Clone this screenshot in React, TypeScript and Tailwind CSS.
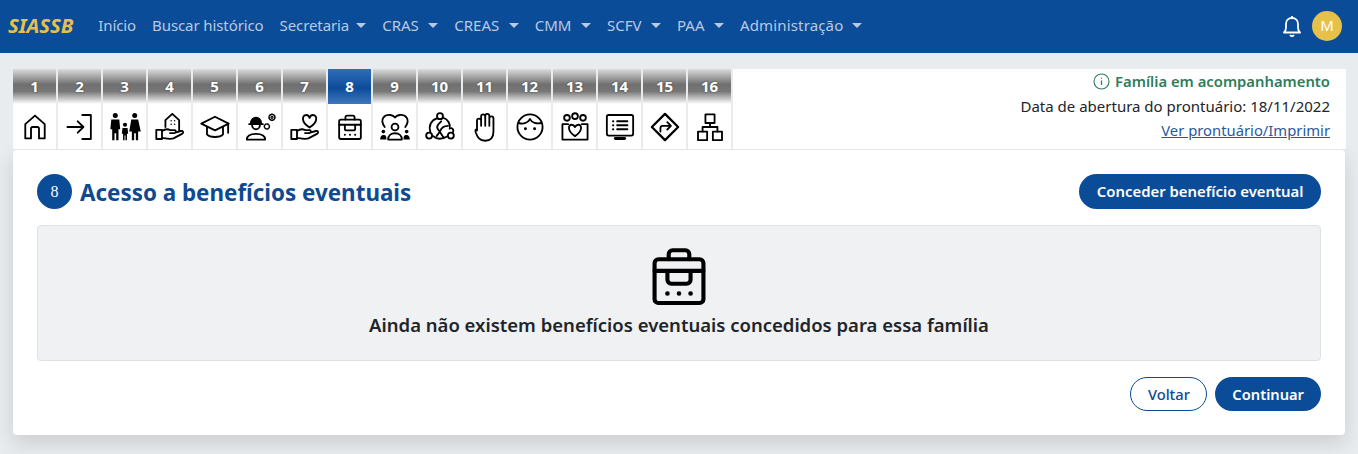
import type { ReactNode } from "react";

const menu = [
  { label: "Início", text: "tracking-[-0.100px]" },
  { label: "Buscar histórico", text: "tracking-[-0.100px]" },
  { label: "Secretaria", text: "tracking-[-0.100px]", caret: "ml-[7px]" },
  { label: "CRAS", text: "", caret: "ml-[9.500px]" },
  { label: "CREAS", text: "", caret: "ml-[9.500px]" },
  { label: "CMM", text: "", caret: "ml-[9.500px]" },
  { label: "SCFV", text: "", caret: "ml-[9.500px]" },
  { label: "PAA", text: "", caret: "ml-[9.500px]" },
  { label: "Administração", text: "tracking-[0.150px]", caret: "ml-[9px]" },
];

const Ico = ({ children, size = 32 }: { children: ReactNode; size?: number }) => (
  <svg width={size} height={size} viewBox="0 0 28 28" fill="none" stroke="#000" strokeWidth="1.600" strokeLinecap="round" strokeLinejoin="round">
    {children}
  </svg>
);

const HandBase = () => (
  <>
    <path d="M2 16.500h5v8H2z" />
    <path d="M7 17.500c3-2 5-2 7-.8h4c1.500 0 1.500 2.600 0 2.600h-4M18.500 19l5-1.500c2-.4 2.800 1.500 1 2.500l-7.500 4c-3 1-6 .2-10-.5" />
  </>
);

const Case = () => (
  <>
    <rect x="4.500" y="7.500" width="19" height="17" rx="1.500" />
    <path d="M4.500 12h19M10 7.500V5.500a1.500 1.500 0 0 1 1.500-1.500h5a1.500 1.500 0 0 1 1.500 1.500v2M9.500 12v3.500a1.500 1.500 0 0 0 1.500 1.500h6a1.500 1.500 0 0 0 1.500-1.500V12" />
    <path d="M9.500 20.800h.01M14 20.800h.01M18.500 20.800h.01" strokeWidth="1.800" />
  </>
);

const icons: ReactNode[] = [
  <Ico key="1">
    <path d="M5.500 24V11.500L14 4l8.500 7.500V24h-5V15.500a1.500 1.500 0 0 0-1.500-1.500h-4a1.500 1.500 0 0 0-1.500 1.500V24z" />
  </Ico>,
  <Ico key="2">
    <path d="M16 3.500h7.500v21H16" />
    <path d="M3 14h14M12 9l5 5-5 5" />
  </Ico>,
  <Ico key="3">
    <g fill="#000" stroke="none">
      <circle cx="5.500" cy="4" r="2.200" />
      <path d="M2 7.500h7l.8 8.500H8.300v9.500h-2v-6h-1.500v6h-2V16H1.200z" />
      <circle cx="22.500" cy="4" r="2.200" />
      <path d="M19.500 7.500h6l2.300 10.500h-2.300v7.500h-2v-6h-1.500v6h-2V18h-2.300z" />
      <circle cx="14" cy="12" r="1.800" />
      <path d="M11.800 14.800h4.400l.6 5h-1.100v5.700h-1.300v-4h-.8v4h-1.300v-5.700h-1.100z" />
    </g>
  </Ico>,
  <Ico key="4">
    <HandBase />
    <path d="M10 14V8l6-5.500L22 8v9M22 8l-6-5.500" />
    <path d="M15 8.500h.01M18 8.500h.01M15 11.500h.01M18 11.500h.01" strokeWidth="1.300" />
  </Ico>,
  <Ico key="5">
    <path d="M14 5 2 11l12 6 12-6z" />
    <path d="M7 14v6.500c2.500 3 11.500 3 14 0V14M25.500 11v8" />
  </Ico>,
  <Ico key="6">
    <path d="M2.500 25c0-3.500 3-5 8-5s8 1.500 8 5z" />
    <path d="M7 11.500c0 6 7 6 7 0" />
    <path d="M4.500 11.500h12" />
    <path d="M6 11c0-7 9-7 9 0z" fill="#000" />
    <circle cx="24.500" cy="5.500" r="2.600" strokeWidth="1.400" strokeDasharray="1.300 1" />
    <circle cx="24.500" cy="5.500" r=".9" strokeWidth="1" />
    <circle cx="20" cy="13.500" r="2.200" strokeWidth="1.300" strokeDasharray="1.200 .9" />
  </Ico>,
  <Ico key="7">
    <HandBase />
    <path d="M18 14.500c-8-5-6.500-11-3-11 1.500 0 2.500 1 3 2.500.5-1.500 1.500-2.500 3-2.500 3.500 0 5 6-3 11z" />
  </Ico>,
  <Ico key="8">
    <Case />
  </Ico>,
  <Ico key="9">
    <path d="M5 14C0 7 5 3 10 3.500c2 .2 3.200 1 4 2.200.8-1.200 2-2 4-2.200 5-.5 10 3.500 5 10.500" />
    <circle cx="14" cy="14" r="3" />
    <path d="M8 25c0-3.500 2.500-5.500 6-5.500s6 2 6 5.500z" />
    <g fill="#000" stroke="none">
      <circle cx="3.800" cy="18" r="1.600" />
      <circle cx="24.200" cy="18" r="1.600" />
      <path d="M1 25c0-2.500 1-4 3-4s2.500 1 2.500 4zM27 25c0-2.500-1-4-3-4s-2.500 1-2.500 4z" />
    </g>
  </Ico>,
  <Ico key="10">
    <circle cx="14" cy="4.500" r="2.600" />
    <circle cx="4.500" cy="21.500" r="2.600" />
    <circle cx="23.500" cy="21.500" r="2.600" />
    <path d="M11.500 6.500C6 8 4 13 5.500 18M17 6c4 1 6.500 6 5.500 9.500M8 22c3 3 8 3 12.500 0M15 9c-3 3-5 5-2 8l4 6M21 13c-4 0-6 2-7 5l-3 4M24 15c2 .5 2 3 1 4" />
  </Ico>,
  <Ico key="11">
    <path d="M7 17V8.500a1.800 1.800 0 0 1 3.600 0V13M10.600 13V4.800a1.800 1.800 0 0 1 3.600 0V13M14.200 13V4.300a1.800 1.800 0 0 1 3.600 0V13M17.800 13V6.500a1.800 1.800 0 0 1 3.600 0V18c0 5-2.500 8-7.200 8C9 26 7.500 23 6 19c-.6-2-.6-3 1-3" />
  </Ico>,
  <Ico key="12">
    <circle cx="14" cy="14" r="11" />
    <path d="M4 10.500c3.500 1 8 .5 10-3.500 1.500 3.500 6 4.500 10 3.500" />
    <path d="M10 15.500h.01M18 15.500h.01" strokeWidth="2.600" />
  </Ico>,
  <Ico key="13">
    <circle cx="7" cy="6" r="2.500" />
    <circle cx="14" cy="4.500" r="2.500" />
    <circle cx="21" cy="6" r="2.500" />
    <path d="M8 11.500H3v13.500h22V11.500h-5" />
    <path d="M14 22c-7-4.500-6-10-3-10 1.500 0 2.500 1 3 2 .5-1 1.500-2 3-2 3 0 4 5.500-3 10z" />
  </Ico>,
  <Ico key="14">
    <rect x="2.500" y="3.500" width="23" height="18" rx="1.500" />
    <path d="M8 9h.01M8 12.500h.01M8 16h.01" strokeWidth="2" />
    <path d="M11.500 9h9M11.500 12.500h9M11.500 16h9" />
    <path d="M10 24h8" strokeWidth="2.600" />
  </Ico>,
  <Ico key="15">
    <path d="M14 2.500 25.500 14 14 25.500 2.500 14z" strokeWidth="2" />
    <path d="M10 18v-3a2 2 0 0 1 2-2h7M16 9.800 19.200 13 16 16.200" />
  </Ico>,
  <Ico key="16">
    <rect x="10" y="3" width="8" height="7.500" />
    <rect x="3.500" y="18" width="8" height="7.500" />
    <rect x="16.500" y="18" width="8" height="7.500" />
    <path d="M14 10.500V14M7.500 18v-4h13v4" />
  </Ico>,
];

export default function App() {
  const tabs = Array.from({ length: 16 }, (_, i) => i + 1);

  return (
    <div className="h-[454px] overflow-hidden bg-[#e9ecef] font-['Noto_Sans','Open_Sans',sans-serif] text-[#212529]">
      <nav className="flex h-[53px] items-center bg-[#0b4c99] pb-[2px] pl-2 pr-4">
        <a className="mr-[25px] text-[20.300px] font-bold italic text-[#e6c14a]">SIASSB</a>
        <ul className="flex items-center gap-4 text-[15px] text-[#b9c9e2]">
          {menu.map((m) => (
            <li key={m.label} className={`flex items-center ${m.text}`}>
              {m.label}
              {m.caret && (
                <span className={`${m.caret} h-0 w-0 border-x-[5.500px] border-t-[5px] border-x-transparent border-t-[#b9c9e2]`} />
              )}
            </li>
          ))}
        </ul>
        <div className="ml-auto flex items-center gap-[11px]">
          <svg width="18" height="22" viewBox="0 0 18 22" fill="none" stroke="#fff" strokeWidth="1.800" strokeLinejoin="round">
            <path d="M1 17.500c1.500-1.500 2-2.500 2-5V9c0-3.500 2.500-6 6-6s6 2.500 6 6v3.500c0 2.500.5 3.500 2 5z" />
            <path d="M7 20c1 1.500 3 1.500 4 0M9 3V1" />
          </svg>
          <span className="flex h-[30px] w-[30px] items-center justify-center rounded-full bg-[#e6c14a] text-[15px] text-white">M</span>
        </div>
      </nav>

      <div className="pl-[13px] pr-[12px] pt-4">
        <div className="flex h-[81px]">
          <div className="flex">
            {tabs.map((n) => (
              <div key={n} className="flex h-[80px] w-[45px] flex-col border-r-2 border-[#e9ecef]">
                <div
                  className={
                    n === 8
                      ? "flex h-[35px] items-center justify-center bg-[linear-gradient(#2f6db8,#0b4c99_55%,#3f78bd)] text-[15px] font-bold text-white"
                      : "flex h-[35px] items-center justify-center bg-[linear-gradient(#dcdcdc,#707070_44%,#777_64%,#fff)] text-[15px] font-bold text-white [text-shadow:0_0_2px_#444]"
                  }
                >
                  {n}
                </div>
                <div className="flex flex-1 items-center justify-center bg-white">{icons[n - 1]}</div>
              </div>
            ))}
          </div>
          <div className="h-[80px] flex-1 bg-white pr-4 text-right text-[14.800px] leading-[24.500px]">
            <div className="flex items-center justify-end gap-[5px] font-semibold text-[#2e7d5b]">
              <svg width="17" height="17" viewBox="0 0 17 17" fill="none" stroke="#2e7d5b" strokeWidth="1.100">
                <circle cx="8.500" cy="8.500" r="7.500" />
                <path d="M8.500 7.500v4.500M8.500 4.800v1" strokeWidth="1.300" />
              </svg>
              Família em acompanhamento
            </div>
            <div className="text-[15px]">Data de abertura do prontuário: 18/11/2022</div>
            <a className="text-[#2a5a9e] underline">Ver prontuário/Imprimir</a>
          </div>
        </div>

        <div className="h-[285px] w-[1332px] rounded-[4px] bg-white px-6 pt-6 shadow-[0_8px_20px_rgba(0,0,0,0.13)]">
          <div className="flex h-[35px] items-center">
            <span className="flex h-[35px] w-[35px] items-center justify-center rounded-full bg-[#0b4c99] font-['Liberation_Serif',serif] text-base text-white">8</span>
            <h1 className="ml-2 mt-[2px] text-[22.400px] font-bold text-[#0f4a91]">Acesso a benefícios eventuais</h1>
            <button className="ml-auto h-[35px] rounded-full bg-[#0b4c99] px-[17.500px] text-[14.900px] font-semibold text-white">
              Conceder benefício eventual
            </button>
          </div>

          <div className="mt-4 flex h-[136px] flex-col items-center rounded-[4px] border border-[#dee2e6] bg-[#f0f1f3] pt-[14px]">
            <Ico size={72}>
              <Case />
            </Ico>
            <p className="text-[18.500px] font-semibold leading-[26px] text-[#212529]">
              Ainda não existem benefícios eventuais concedidos para essa família
            </p>
          </div>

          <div className="mt-4 flex justify-end gap-2">
            <button className="h-[34px] rounded-full border border-[#0b4c99] px-[16.500px] text-[14.700px] font-medium text-[#0f4a91]">Voltar</button>
            <button className="h-[34px] rounded-full bg-[#0b4c99] px-[17px] text-[14.700px] font-semibold text-white">Continuar</button>
          </div>
        </div>
      </div>
    </div>
  );
}
